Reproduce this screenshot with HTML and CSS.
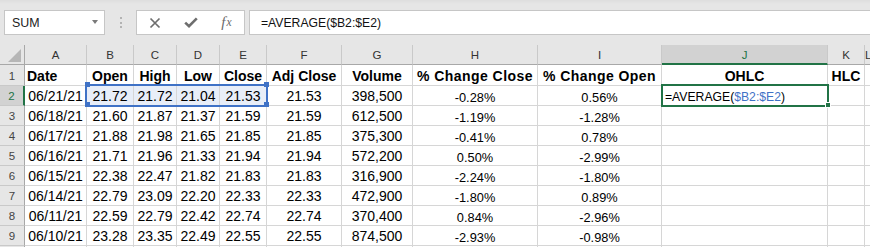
FILE: index.html
```html
<!DOCTYPE html>
<html>
<head>
<meta charset="utf-8">
<link rel="stylesheet" href="styles.css">
</head>
<body>
<div class="toolbar">
  <div class="namebox"><span>SUM</span><span class="caret"></span></div>
  <div class="grip"><i></i><i></i><i></i></div>
  <div class="fbuttons">
    <span class="btn"><svg width="12" height="12" viewBox="0 0 12 12"><path d="M1.5 1.5 L10.5 10.5 M10.5 1.5 L1.5 10.5" stroke="#6e6e6e" stroke-width="1.7" fill="none"/></svg></span>
    <span class="btn"><svg width="14" height="11" viewBox="0 0 14 11"><path d="M1.2 5.6 L5 9.2 L12.8 1.4" stroke="#6e6e6e" stroke-width="2.6" fill="none" stroke-linejoin="miter"/></svg></span>
    <span class="btn fx">f<i>x</i></span>
  </div>
  <div class="finput">=AVERAGE($B2:$E2)</div>
</div>

<div class="sheet">
  <div class="ch corner"><span class="tri"></span></div>
  <div class="ch">A</div><div class="ch">B</div><div class="ch">C</div><div class="ch">D</div><div class="ch">E</div><div class="ch">F</div><div class="ch">G</div><div class="ch">H</div><div class="ch">I</div><div class="ch active">J</div><div class="ch">K</div><div class="ch">L</div>

  <div class="rh">1</div>
  <div class="c b left">Date</div><div class="c b">Open</div><div class="c b">High</div><div class="c b">Low</div><div class="c b">Close</div><div class="c b">Adj Close</div><div class="c b">Volume</div><div class="c b wide">% Change Close</div><div class="c b wide">% Change Open</div><div class="c b">OHLC</div><div class="c b">HLC</div><div class="c"></div>

  <div class="rh active">2</div>
  <div class="c">06/21/21</div><div class="c sel">21.72</div><div class="c sel">21.72</div><div class="c sel">21.04</div><div class="c sel">21.53</div><div class="c">21.53</div><div class="c">398,500</div><div class="c p">-0.28%</div><div class="c p">0.56%</div><div class="c p left formula">=AVERAGE(<span class="ref">$B2:$E2</span>)</div><div class="c"></div><div class="c"></div>

  <div class="rh">3</div>
  <div class="c">06/18/21</div><div class="c">21.60</div><div class="c">21.87</div><div class="c">21.37</div><div class="c">21.59</div><div class="c">21.59</div><div class="c">612,500</div><div class="c p">-1.19%</div><div class="c p">-1.28%</div><div class="c"></div><div class="c"></div><div class="c"></div>

  <div class="rh">4</div>
  <div class="c">06/17/21</div><div class="c">21.88</div><div class="c">21.98</div><div class="c">21.65</div><div class="c">21.85</div><div class="c">21.85</div><div class="c">375,300</div><div class="c p">-0.41%</div><div class="c p">0.78%</div><div class="c"></div><div class="c"></div><div class="c"></div>

  <div class="rh">5</div>
  <div class="c">06/16/21</div><div class="c">21.71</div><div class="c">21.96</div><div class="c">21.33</div><div class="c">21.94</div><div class="c">21.94</div><div class="c">572,200</div><div class="c p">0.50%</div><div class="c p">-2.99%</div><div class="c"></div><div class="c"></div><div class="c"></div>

  <div class="rh">6</div>
  <div class="c">06/15/21</div><div class="c">22.38</div><div class="c">22.47</div><div class="c">21.82</div><div class="c">21.83</div><div class="c">21.83</div><div class="c">316,900</div><div class="c p">-2.24%</div><div class="c p">-1.80%</div><div class="c"></div><div class="c"></div><div class="c"></div>

  <div class="rh">7</div>
  <div class="c">06/14/21</div><div class="c">22.79</div><div class="c">23.09</div><div class="c">22.20</div><div class="c">22.33</div><div class="c">22.33</div><div class="c">472,900</div><div class="c p">-1.80%</div><div class="c p">0.89%</div><div class="c"></div><div class="c"></div><div class="c"></div>

  <div class="rh">8</div>
  <div class="c">06/11/21</div><div class="c">22.59</div><div class="c">22.79</div><div class="c">22.42</div><div class="c">22.74</div><div class="c">22.74</div><div class="c">370,400</div><div class="c p">0.84%</div><div class="c p">-2.96%</div><div class="c"></div><div class="c"></div><div class="c"></div>

  <div class="rh">9</div>
  <div class="c">06/10/21</div><div class="c">23.28</div><div class="c">23.35</div><div class="c">22.49</div><div class="c">22.55</div><div class="c">22.55</div><div class="c">874,500</div><div class="c p">-2.93%</div><div class="c p">-0.98%</div><div class="c"></div><div class="c"></div><div class="c"></div>

  <div class="rh"></div>
  <div class="c"></div><div class="c"></div><div class="c"></div><div class="c"></div><div class="c"></div><div class="c"></div><div class="c"></div><div class="c"></div><div class="c"></div><div class="c"></div><div class="c"></div><div class="c"></div>

  <div class="range"></div>
  <div class="handle h-tl"></div><div class="handle h-tr"></div><div class="handle h-bl"></div><div class="handle h-br"></div>
  <div class="activecell"></div>
  <div class="fillhandle"></div>
</div>
</body>
</html>
```

FILE: styles.css
```css
* { box-sizing: border-box; }

body {
  margin: 0;
  width: 870px;
  height: 247px;
  overflow: hidden;
  background: #fff;
  font-family: "Liberation Sans", Arial, sans-serif;
  color: #000;
}

/* ---------- formula bar ---------- */
.toolbar {
  height: 45px;
  background: linear-gradient(#dedede 0, #e6e6e6 4px, #e6e6e6 100%);
  display: flex;
  align-items: flex-start;
  padding: 10px 0 0 4px;
}

.namebox {
  width: 101px;
  height: 25px;
  background: #fff;
  border: 1px solid #c6c6c6;
  display: flex;
  align-items: center;
  justify-content: space-between;
  padding: 0 6px 0 7px;
  font-size: 12.4px;
  color: #222;
}

.caret {
  width: 0;
  height: 0;
  border-left: 3.5px solid transparent;
  border-right: 3.5px solid transparent;
  border-top: 4px solid #7a7a7a;
  margin-top: -2px;
}

.grip {
  width: 31px;
  height: 25px;
  display: flex;
  flex-direction: column;
  align-items: center;
  justify-content: center;
  gap: 2.3px;
}

.grip i {
  display: block;
  width: 2px;
  height: 2px;
  background: #b3b3b3;
}

.fbuttons {
  width: 109px;
  height: 25px;
  background: #fff;
  border: 1px solid #c6c6c6;
  display: flex;
}

.btn {
  width: 36px;
  display: flex;
  align-items: center;
  justify-content: center;
}

.btn:last-child { width: 35px; }

.fx {
  font-family: "Liberation Serif", "Times New Roman", serif;
  font-style: italic;
  font-size: 15px;
  color: #6a6a6a;
  padding-bottom: 1px;
}

.fx i {
  font-size: 11.5px;
  margin-left: 1px;
}

.finput {
  flex: 1;
  margin-left: 4px;
  height: 25px;
  background: #fff;
  border: 1px solid #c6c6c6;
  border-right: none;
  padding-left: 11px;
  display: flex;
  align-items: center;
  font-size: 12.2px;
  color: #111;
}

/* ---------- sheet ---------- */
.sheet {
  position: relative;
  display: grid;
  grid-template-columns: 25px 62px 47px 43px 43px 47px 75px 71px 125px 124px 166px 37px 1fr;
  grid-template-rows: 20px 21px repeat(9, 20px);
}

.ch {
  background: #e6e6e6;
  border-right: 1px solid #c9c9c9;
  border-bottom: 1px solid #a8a8a8;
  display: flex;
  align-items: center;
  justify-content: center;
  font-size: 11.5px;
  color: #333;
  padding-top: 1px;
}

.ch.corner {
  position: relative;
  border-right: 1px solid #a8a8a8;
}

.tri {
  position: absolute;
  right: 3px;
  bottom: 2px;
  width: 0;
  height: 0;
  border-left: 13px solid transparent;
  border-bottom: 13px solid #b6b6b6;
}

.ch.active {
  background: #d2d2d2;
  color: #217346;
  border-bottom: 2px solid #217346;
  padding-top: 2px;
}

.rh {
  background: #e6e6e6;
  border-right: 1px solid #a8a8a8;
  border-bottom: 1px solid #c9c9c9;
  display: flex;
  align-items: center;
  justify-content: center;
  font-size: 11.5px;
  color: #444;
  padding-top: 1px;
}

.rh.active {
  background: #d2d2d2;
  color: #217346;
  border-right: 2px solid #217346;
}

.c {
  border-right: 1px solid #d6d6d6;
  border-bottom: 1px solid #d6d6d6;
  display: flex;
  align-items: center;
  justify-content: center;
  font-size: 14px;
  white-space: nowrap;
  overflow: hidden;
  padding-top: 1px;
}

.c.b { font-weight: bold; }

.c.wide { letter-spacing: 0.45px; }

.c.left {
  justify-content: flex-start;
  padding-left: 2px;
}

.c.p {
  font-size: 12.8px;
  padding-top: 3px;
}

.c.formula {
  padding-left: 3px;
  font-size: 12.2px;
}

.ref { color: #3f72c6; }

.c.sel { background: #e8eef8; }

/* overlays */
.range {
  position: absolute;
  left: 85px;
  top: 39px;
  width: 183px;
  height: 23px;
  border: 2px solid #3f72c6;
}

.handle {
  position: absolute;
  width: 5px;
  height: 5px;
  background: #3f72c6;
}

.h-tl { left: 85px; top: 37px; }
.h-tr { left: 264px; top: 37px; }
.h-bl { left: 85px; top: 57px; }
.h-br { left: 264px; top: 57px; }

.activecell {
  position: absolute;
  left: 661px;
  top: 39px;
  width: 168px;
  height: 23px;
  border: 2px solid #217346;
}

.fillhandle {
  position: absolute;
  left: 825px;
  top: 57px;
  width: 6px;
  height: 6px;
  background: #217346;
  border: 1px solid #fff;
}
```
